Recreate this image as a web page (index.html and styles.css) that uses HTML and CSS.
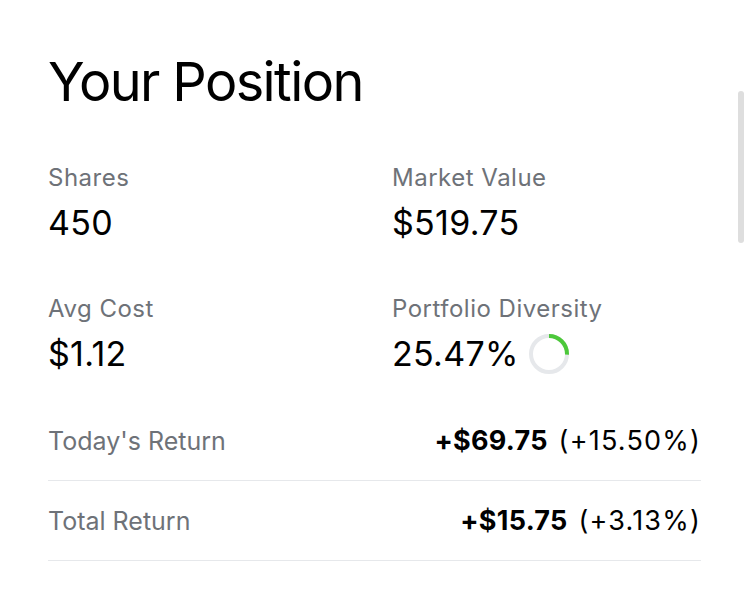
FILE: index.html
```html
<!DOCTYPE html>
<html>
<head>
<meta charset="utf-8">
<link rel="stylesheet" href="styles.css">
</head>
<body>
<div class="page">
  <h1 class="title">Your Position</h1>
  <div class="stats">
    <div class="stat">
      <div class="label">Shares</div>
      <div class="value">450</div>
    </div>
    <div class="stat">
      <div class="label">Market Value</div>
      <div class="value">$519.75</div>
    </div>
    <div class="stat">
      <div class="label">Avg Cost</div>
      <div class="value">$1.12</div>
    </div>
    <div class="stat">
      <div class="label">Portfolio Diversity</div>
      <div class="value value-ring">25.47%
        <svg class="ring" width="40" height="40" viewBox="0 0 40 40">
          <circle cx="20" cy="20" r="18" fill="none" stroke="#e6e8eb" stroke-width="4"/>
          <circle cx="20" cy="20" r="18" fill="none" stroke="#4cc83a" stroke-width="4" stroke-dasharray="28.8 200" transform="rotate(-90 20 20)"/>
        </svg>
      </div>
    </div>
  </div>
  <div class="returns">
    <div class="row">
      <span class="row-label">Today's Return</span>
      <span class="row-value"><b>+$69.75</b> (+15.50%)</span>
    </div>
    <div class="row">
      <span class="row-label">Total Return</span>
      <span class="row-value"><b>+$15.75</b> (+3.13%)</span>
    </div>
  </div>
</div>
<div class="scrollbar"></div>
</body>
</html>
```
FILE: styles.css
```css
html, body {
  margin: 0;
  padding: 0;
  background: #fff;
}
body {
  font-family: Inter, "Liberation Sans", sans-serif;
  color: #000;
  width: 750px;
  height: 610px;
  overflow: hidden;
  position: relative;
}
.page {
  width: 653px;
  padding: 50px 0 0 48px;
}
.title {
  margin: 0;
  font-size: 54px;
  line-height: 64px;
  font-weight: 400;
  letter-spacing: -1.6px;
}
.stats {
  display: grid;
  grid-template-columns: 308px 1fr;
  column-gap: 36px;
  row-gap: 48px;
  margin-top: 48px;
}
.label {
  font-size: 24px;
  line-height: 32px;
  color: #6e7278;
  letter-spacing: 0.5px;
}
.value {
  margin-top: 7px;
  font-size: 34px;
  line-height: 44px;
  letter-spacing: 0.3px;
}
.value-ring {
  display: flex;
  align-items: center;
  gap: 10px;
}
.ring {
  display: block;
}
.returns {
  margin-top: 25px;
}
.row {
  display: flex;
  justify-content: space-between;
  align-items: center;
  height: 79px;
  border-bottom: 1px solid #e6e8eb;
  font-size: 25px;
}
.row-label {
  color: #6e7278;
}
.row-value {
  font-size: 27px;
  letter-spacing: 1.2px;
}
.row-value b {
  font-weight: 700;
  letter-spacing: 0.3px;
  margin-right: 2px;
}
.scrollbar {
  position: absolute;
  left: 738px;
  top: 91px;
  width: 6px;
  height: 152px;
  border-radius: 3px;
  background: #dedede;
}
```
